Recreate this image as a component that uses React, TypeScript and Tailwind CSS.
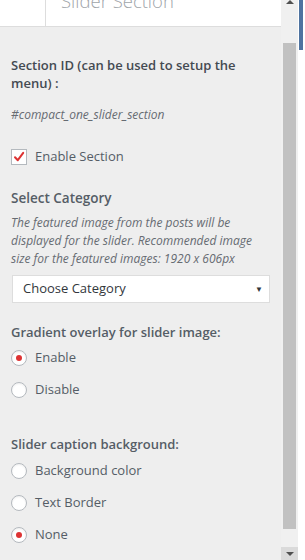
import { useState } from 'react';

const font = { fontFamily: '"Open Sans", "Noto Sans", sans-serif' };

function Radio({ label, checked, onClick, className }: { label: string; checked: boolean; onClick: () => void; className?: string }) {
  return (
    <label onClick={onClick} className={`flex items-center h-[18px] cursor-pointer ${className || ''}`}>
      <span className="w-4 h-4 rounded-full border border-[#b4b9be] bg-white flex items-center justify-center shadow-[inset_0_1px_2px_rgba(0,0,0,0.07)]">
        {checked && <span className="w-[6px] h-[6px] rounded-full bg-[#dd3333]" />}
      </span>
      <span className="ml-[8px] text-[13px] text-[#555d66]">{label}</span>
    </label>
  );
}

function App() {
  const [enabled, setEnabled] = useState(true);
  const [gradient, setGradient] = useState('enable');
  const [caption, setCaption] = useState('none');

  return (
    <div className="w-[305px] h-[560px] flex bg-white overflow-hidden" style={font}>
      {/* main panel */}
      <div className="w-[281px] h-full flex flex-col bg-[#eeeeee]">
        {/* header */}
        <div className="h-[27px] bg-white border-b border-[#dddddd] flex overflow-hidden shrink-0">
          <div className="w-[46px] border-r border-[#dddddd]" />
          <div className="pl-[15px] -mt-[13px] text-[18.5px] font-light leading-[28px] text-[#a0a5aa] whitespace-nowrap">
            Slider Section
          </div>
        </div>

        <div className="pl-[11px] pr-[10px] text-[#555d66]">
          <div className="mt-[29px] text-[13px] font-semibold leading-[18px] text-[#444a52]">
            Section ID (can be used to setup the menu) :
          </div>
          <div className="mt-[14px] text-[12px] italic leading-[18px] text-[#666b72]">
            #compact_one_slider_section
          </div>

          <label onClick={() => setEnabled(!enabled)} className="mt-[25px] flex items-center h-4 cursor-pointer">
            <span className="w-4 h-4 border border-[#b4b9be] bg-white flex items-center justify-center">
              {enabled && (
                <svg width="12" height="12" viewBox="0 0 12 12">
                  <path d="M2 6.2 L4.8 9.2 L10.2 1.8" fill="none" stroke="#dd3333" strokeWidth="2" strokeLinecap="round" strokeLinejoin="round" />
                </svg>
              )}
            </span>
            <span className="ml-[8px] text-[13px]">Enable Section</span>
          </label>

          <div className="mt-[24px] text-[13.5px] font-semibold leading-[18px]">Select Category</div>
          <div className="mt-[7px] text-[12px] italic leading-[18px] text-[#666b72]">
            The featured image from the posts will be displayed for the slider. Recommended image size for the featured images: 1920 x 606px
          </div>
          <div className="mt-[7px] ml-px w-[258px] h-[28px] bg-white border border-[#dddddd] flex items-center justify-between pl-[10px] pr-[6px]">
            <span className="text-[13px] text-[#32373c]">Choose Category</span>
            <span className="text-[8px] text-[#32373c]">▼</span>
          </div>

          <div className="mt-[20px] text-[13px] font-semibold leading-[18px]">Gradient overlay for slider image:</div>
          <Radio className="mt-[8px]" label="Enable" checked={gradient === 'enable'} onClick={() => setGradient('enable')} />
          <Radio className="mt-[14px]" label="Disable" checked={gradient === 'disable'} onClick={() => setGradient('disable')} />

          <div className="mt-[36px] text-[13px] font-semibold leading-[18px]">Slider caption background:</div>
          <Radio className="mt-[9px]" label="Background color" checked={caption === 'bg'} onClick={() => setCaption('bg')} />
          <Radio className="mt-[14px]" label="Text Border" checked={caption === 'border'} onClick={() => setCaption('border')} />
          <Radio className="mt-[14px]" label="None" checked={caption === 'none'} onClick={() => setCaption('none')} />
        </div>
      </div>

      {/* scrollbar */}
      <div className="w-[17px] h-full bg-[#f0f0f0] flex flex-col items-center">
        <div className="h-[43px] w-full flex justify-center">
          <div className="w-0 h-0 border-x-[4px] border-x-transparent border-b-[4px] border-b-[#505050]" />
        </div>
        <div className="w-[13px] h-[486px] bg-[#c1c1c1]" />
        <div className="flex-1" />
        <div className="h-[13px] w-full bg-[#dadada] flex justify-center pt-[5px]">
          <div className="w-0 h-0 border-x-[4px] border-x-transparent border-t-[4px] border-t-[#505050]" />
        </div>
      </div>

      {/* right edge */}
      <div className="flex-1 bg-white pl-px">
        <div className="w-[4px] h-[50px] bg-[#4e73a0]" />
      </div>
    </div>
  );
}

export default App;
